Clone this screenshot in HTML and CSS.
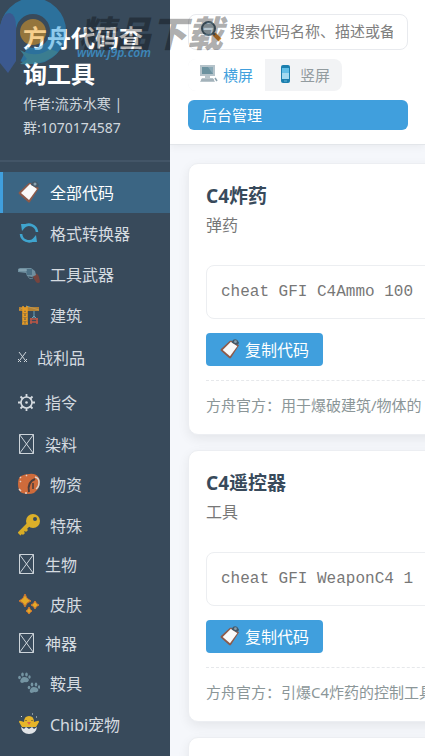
FILE: index.html
```html
<!DOCTYPE html>
<html lang="zh-CN">
<head>
    <meta charset="UTF-8">
    <meta name="viewport" content="width=device-width, initial-scale=1.0">
    <title>方舟代码查询工具</title>
    <link rel="stylesheet" href="styles.css">
</head>
<body>
    <!-- 图标定义 -->
    <svg class="icon-defs" aria-hidden="true">
        <symbol id="i-clipboard" viewBox="0 0 22 22">
            <path d="M13 2 21 7 12 21 Q11 22 10 21L1 13Q0 12 1 11L11 2Z" fill="#8d5a4a"/>
            <path d="M12 3 19 8 11 19 3 12Z" fill="#fafafa"/>
            <path d="M13 3Q15-1 19 1L21 4Q20 7 17 6L13 4Z" fill="#43596a"/>
            <circle cx="17" cy="3" r="1.5" fill="#8ba1ae"/>
        </symbol>
        <symbol id="i-refresh" viewBox="0 0 22 22">
            <path d="M19 10A8 8 0 0 0 6 4.500M3 12A8 8 0 0 0 16 17.500" fill="none" stroke="#3fa5cf" stroke-width="2.600"/>
            <path d="M3 2 10 2 4 9ZM19 20 12 20 18 13Z" fill="#3fa5cf"/>
        </symbol>
        <symbol id="i-gun" viewBox="0 0 22 22">
            <path d="M15 10Q20 10 21 14L22 19Q20 21 18 19L15 14Z" fill="#76443e"/>
            <path d="M0 6 2 5H13L17 8 18 12 14 14 9 13 8 10 0 9Z" fill="#6f8f9f"/>
            <path d="M8 6H14V12H9Z" fill="#4d7186"/>
            <path d="M1 7H9" stroke="#9ab5c2"/>
            <path d="M10 13Q11 17 15 15" fill="none" stroke="#668391"/>
        </symbol>
        <symbol id="i-crane" viewBox="0 0 22 22">
            <path d="M6 3 1 6M8 2 21 6M16 7V14M13 15 16 12 19 15" fill="none" stroke="#6aa0b8"/>
            <path d="M1 6H21M1 4H21" stroke="#dc9428" stroke-width="1.500"/>
            <path d="M5 2V20M9 2V20M5 3 9 7 5 11 9 15 5 19M9 3 5 7 9 11 5 15 9 19M4 20H10" fill="none" stroke="#e59b25" stroke-width="1.500"/>
            <path d="M12 15H20M12 18H20M13 14V20M19 14V20" stroke="#bd5746" stroke-width="1.500"/>
        </symbol>
        <symbol id="i-swords" viewBox="0 0 9 12">
            <path d="M1 1 7 9M8 1 2 9M0 8 3 11M9 8 6 11M0 11 2 9M9 11 7 9" fill="none" stroke="#cfd6db"/>
        </symbol>
        <symbol id="i-gear" viewBox="0 0 17 17">
            <circle cx="8.500" cy="8.500" r="5.500" fill="none" stroke="#d5dbe0" stroke-width="1.600"/>
            <circle cx="8.500" cy="8.500" r="1.300" fill="#d5dbe0"/>
            <path d="M8.500 0V3M8.500 14V17M0 8.500H3M14 8.500H17M2.500 2.500 4.500 4.500M12.500 12.500 14.500 14.500M14.500 2.500 12.500 4.500M4.500 12.500 2.500 14.500" stroke="#d5dbe0" stroke-width="1.800"/>
        </symbol>
        <symbol id="i-box" viewBox="0 0 17 20">
            <path d="M1.500.500H15.500V19.500H1.500ZM1.500.500 15.500 19.500M15.500.500 1.500 19.500" fill="none" stroke="#cdd4da"/>
        </symbol>
        <symbol id="i-bag" viewBox="0 0 22 22">
            <path d="M3 3Q7 1 11 1 18 0 21 5 23 10 20 16L16 20Q11 22 4 20 0 18 0 11 0 5 3 3Z" fill="#ce6b3b"/>
            <path d="M17 4Q21 5 21 9 21 14 18 16" fill="none" stroke="#dcd5cf" stroke-width="1.500"/>
            <path d="M11 19Q9 9 17 6" fill="none" stroke="#4a3d3c" stroke-width="2"/>
            <path d="M15 10V16" stroke="#4a3d3c" stroke-width="1.500"/>
            <path d="M2 5 3 4M8 3 9 2M1 16 3 18M7 20H9M2 9 3 8" stroke="#e6cfc4" stroke-width="1.500"/>
        </symbol>
        <symbol id="i-key" viewBox="0 0 22 22">
            <path d="M10 11 1 20" stroke="#d8ac26" stroke-width="4"/>
            <path d="M4 18 6 20M7 15 9 17" stroke="#d8ac26" stroke-width="3"/>
            <circle cx="15" cy="7" r="7" fill="#dbaf29"/>
            <circle cx="17" cy="5" r="2" fill="#384a5b"/>
        </symbol>
        <symbol id="i-sparkle" viewBox="0 0 22 22">
            <path d="M7 1Q8 6 13 8Q8 9 7 14Q6 9 1 8Q6 6 7 1ZM17 8Q18 11 21 12Q18 13 17 16Q16 13 13 12Q16 11 17 8ZM11 14Q12 17 14 18Q12 19 11 21Q10 19 8 18Q10 17 11 14Z" fill="#e4a927" stroke="#d4762f"/>
        </symbol>
        <symbol id="i-paws" viewBox="0 0 22 22">
            <g id="paw" fill="#7595a3">
                <path d="M6 5Q10 5 11 8Q10 11 7 10L4 11Q1 10 3 7Q4 5 6 5Z"/>
                <ellipse cx="1.500" cy="5.500" rx="1.300" ry="1.800"/>
                <ellipse cx="4.500" cy="2.500" rx="1.300" ry="2"/>
                <ellipse cx="8.500" cy="2.500" rx="1.300" ry="2"/>
                <ellipse cx="11.500" cy="5" rx="1.200" ry="1.800"/>
            </g>
            <use href="#paw" x="9.500" y="10"/>
        </symbol>
        <symbol id="i-chick" viewBox="0 0 22 22">
            <path d="M4 14 1 9Q1 7 3 8L6 9Q6 3 11 3T16 9L19 8Q21 7 21 9L18 14Z" fill="#e5b529"/>
            <path d="M3 14 6 16 8 14 11 16 14 14 16 16 19 14Q18 21 11 21T3 14Z" fill="#e1e4e7"/>
            <path d="M9 9 11 12 13 9Z" fill="#d9664e"/>
            <path d="M8 7V8M14 7V8" stroke="#4b4539"/>
            <path d="M3 3 4 4M14 1H15M18 4H19" stroke="#d7dce0"/>
        </symbol>
        <symbol id="i-search" viewBox="0 0 22 22">
            <path d="M14 14 20 20" stroke="#e08b2f" stroke-width="4"/>
            <path d="M12 12 15 15" stroke="#55616b" stroke-width="2"/>
            <circle cx="8.500" cy="8.500" r="6.500" fill="#b6c6cf" stroke="#4e6675" stroke-width="2"/>
        </symbol>
        <symbol id="i-desktop" viewBox="0 0 18 18">
            <path d="M0 0H15V11H0Z" fill="#b5c3ca"/>
            <path d="M2 2H13V9H2Z" fill="#6c929f"/>
            <path d="M8 2H13V9Z" fill="#8aa9b6"/>
            <path d="M5 11H10V13H5ZM2 13H13L15 17H0Z" fill="#b9c5cb"/>
            <path d="M1 15H14" stroke="#8ea0aa"/>
            <path d="M15 13 17 16" stroke="#8ba1ad" stroke-width="1.500"/>
        </symbol>
        <symbol id="i-phone" viewBox="0 0 10 18">
            <rect width="9" height="18" rx="2" fill="#1c7fae"/>
            <path d="M1 3H8V14H1Z" fill="#62bfe7"/>
            <path d="M1 8H8V14H1Z" fill="#a3daf0"/>
            <path d="M3 16H6" stroke="#67b6d7"/>
        </symbol>
    </svg>

    <div class="app">
        <aside class="sidebar">
            <div class="sidebar-header">
                <h1>方舟代码查询工具</h1>
                <p>作者:流苏水寒 | 群:1070174587</p>
            </div>
            <nav class="category-list">
                <a href="#" class="category active"><svg class="icon"><use href="#i-clipboard"/></svg>全部代码</a>
                <a href="#" class="category"><svg class="icon"><use href="#i-refresh"/></svg>格式转换器</a>
                <a href="#" class="category"><svg class="icon"><use href="#i-gun"/></svg>工具武器</a>
                <a href="#" class="category"><svg class="icon"><use href="#i-crane"/></svg>建筑</a>
                <a href="#" class="category symbol-sword"><svg class="icon"><use href="#i-swords"/></svg>战利品</a>
                <a href="#" class="category symbol-gear"><svg class="icon"><use href="#i-gear"/></svg>指令</a>
                <a href="#" class="category symbol-box"><svg class="icon"><use href="#i-box"/></svg>染料</a>
                <a href="#" class="category"><svg class="icon"><use href="#i-bag"/></svg>物资</a>
                <a href="#" class="category"><svg class="icon"><use href="#i-key"/></svg>特殊</a>
                <a href="#" class="category symbol-box"><svg class="icon"><use href="#i-box"/></svg>生物</a>
                <a href="#" class="category"><svg class="icon"><use href="#i-sparkle"/></svg>皮肤</a>
                <a href="#" class="category symbol-box"><svg class="icon"><use href="#i-box"/></svg>神器</a>
                <a href="#" class="category"><svg class="icon"><use href="#i-paws"/></svg>鞍具</a>
                <a href="#" class="category"><svg class="icon"><use href="#i-chick"/></svg>Chibi宠物</a>
            </nav>
        </aside>

        <main class="content">
            <header class="toolbar">
                <label class="search-box">
                    <svg class="icon"><use href="#i-search"/></svg>
                    <input type="text" aria-label="搜索代码" placeholder="搜索代码名称、描述或备注...">
                </label>
                <div class="view-toggle">
                    <button type="button" class="view-btn active"><svg class="desktop"><use href="#i-desktop"/></svg>横屏</button>
                    <button type="button" class="view-btn"><svg class="phone"><use href="#i-phone"/></svg>竖屏</button>
                </div>
                <a href="#" class="admin-btn">后台管理</a>
            </header>

            <div class="code-grid">
                <article class="code-card">
                    <h2>C4炸药</h2>
                    <p class="code-type">弹药</p>
                    <code class="code-text">cheat GFI C4Ammo 100</code>
                    <button type="button" class="copy-btn"><svg class="icon"><use href="#i-clipboard"/></svg>复制代码</button>
                    <p class="code-note">方舟官方：用于爆破建筑/物体的</p>
                </article>
                <article class="code-card">
                    <h2>C4遥控器</h2>
                    <p class="code-type">工具</p>
                    <code class="code-text">cheat GFI WeaponC4 1</code>
                    <button type="button" class="copy-btn"><svg class="icon"><use href="#i-clipboard"/></svg>复制代码</button>
                    <p class="code-note">方舟官方：引爆C4炸药的控制工具</p>
                </article>
                <article class="code-card"></article>
            </div>
        </main>
    </div>

    <!-- 站点水印 -->
    <div class="watermark" aria-hidden="true">
        <svg class="watermark-logo" viewBox="0 0 66 74">
            <path d="M8 31A25 25 0 1 1 33 56Q28 56 24 54" fill="none" stroke="#2298dc" stroke-width="16"/>
            <path d="M0 26Q3 12 10 13Q16 15 16 26V61L8 73 0 63Z" fill="#3f68c4"/>
            <path d="M20 50Q36 59 50 49L58 52Q45 66 20 64L27 59Z" fill="#3fb0c6"/>
            <circle cx="33" cy="32" r="13" fill="#efa01e"/>
        </svg>
        <span class="watermark-name">精品下载</span>
        <span class="watermark-url">www.j9p.com</span>
    </div>
</body>
</html>
```

FILE: styles.css
```css
* {
    margin: 0;
    padding: 0;
    box-sizing: border-box;
}

body {
    font-family: "Noto Sans", "Noto Sans CJK SC", sans-serif;
    font-size: 16px;
    background: #f5f7fb;
    color: #384a5b;
    overflow: hidden;
}

a {
    text-decoration: none;
}

button,
input {
    font-family: inherit;
    border: none;
}

svg {
    flex-shrink: 0;
}

.icon-defs {
    display: none;
}

.icon {
    width: 22px;
    height: 22px;
}

.app {
    display: flex;
    height: 100vh;
}

/* 侧边栏 */
.sidebar {
    width: 40%;
    max-width: 260px;
    flex-shrink: 0;
    background: #384a5b;
    color: white;
    overflow: hidden;
}

.sidebar-header {
    padding: 20px 23px;
    border-bottom: 2px solid #435567;
}

.sidebar-header h1 {
    font-size: 24px;
    line-height: 36px;
}

.sidebar-header p {
    font-size: 14px;
    line-height: 24px;
    color: #d0d7dd;
}

.category-list {
    padding-top: 10px;
}

.category {
    display: flex;
    align-items: center;
    gap: 10px;
    height: 41px;
    padding-bottom: 2px;
    padding-left: 15px;
    border-left: 3px solid transparent;
    color: #d5dbe0;
    white-space: nowrap;
}

.category.active {
    background: #3b6583;
    border-left-color: #409fdd;
    color: white;
}

.symbol-sword {
    height: 44px;
}

.symbol-sword .icon {
    width: 9px;
    height: 12px;
}

.symbol-gear {
    height: 46px;
}

.symbol-gear .icon {
    width: 17px;
    height: 17px;
}

.symbol-box {
    height: 38px;
}

.symbol-box .icon {
    width: 17px;
    height: 20px;
}

/* 主内容 */
.content {
    flex: 1;
    min-width: 0;
    overflow: hidden;
}

.toolbar {
    display: flex;
    flex-direction: column;
    gap: 9px;
    padding: 14px 17px 14px 18px;
    background: white;
    border-bottom: 1px solid #e3e6ea;
    box-shadow: 0 2px 8px rgba(0, 0, 0, 0.05);
}

.search-box {
    display: flex;
    align-items: center;
    gap: 8px;
    height: 36px;
    padding: 0 14px 2px 11px;
    border: 1px solid #e8eaee;
    border-radius: 8px;
}

.search-box input {
    flex: 1;
    min-width: 0;
    background: transparent;
    font-size: 15px;
    outline: none;
}

.search-box input::placeholder {
    color: #808080;
}

.view-toggle {
    display: flex;
    align-self: flex-start;
    background: #f2f3f5;
    border-radius: 8px;
    overflow: hidden;
}

.view-btn {
    display: flex;
    align-items: center;
    gap: 5px;
    height: 32px;
    padding: 0 12px 2px;
    background: transparent;
    color: #929b9f;
    font-size: 15px;
}

.view-btn.active {
    background: white;
    color: #409fdd;
}

.desktop,
.phone {
    width: 18px;
    height: 18px;
}

.admin-btn {
    padding: 0 14px;
    background: #409fdd;
    color: white;
    border-radius: 6px;
    font-size: 15px;
    line-height: 30px;
}

.code-grid {
    display: grid;
    grid-template-columns: repeat(auto-fill, minmax(300px, 1fr));
    gap: 15px;
    padding: 18px;
}

.code-card {
    min-height: 272px;
    padding: 17px;
    background: white;
    border: 1px solid #eceef2;
    border-radius: 10px;
    box-shadow: 0 4px 12px rgba(0, 0, 0, 0.07);
}

.code-card h2 {
    font-size: 19px;
    line-height: 30px;
}

.code-type {
    color: #777;
    line-height: 28px;
}

.code-text {
    display: block;
    margin: 26px 0 14px;
    padding: 14px;
    border: 1px solid #eceef1;
    border-radius: 8px;
    color: #777;
    font-family: "Courier New", "Liberation Mono", monospace;
    font-size: 16px;
    line-height: 24px;
    white-space: nowrap;
    overflow: hidden;
}

.copy-btn {
    display: flex;
    align-items: center;
    gap: 5px;
    height: 33px;
    padding: 0 14px 2px;
    background: #409fdd;
    color: white;
    border-radius: 4px;
    font-size: 16px;
}

.copy-btn .icon {
    width: 20px;
    height: 20px;
}

.code-note {
    margin-top: 14px;
    padding-top: 12px;
    border-top: 1px dashed #e6e8eb;
    color: #8b9698;
    font-size: 15px;
    line-height: 24px;
    white-space: nowrap;
}

/* 水印 */
.watermark {
    position: absolute;
    top: 0;
    left: 0;
    width: 230px;
    height: 74px;
    pointer-events: none;
}

.watermark-logo {
    position: absolute;
    top: 0;
    left: 0;
    width: 66px;
    height: 74px;
    opacity: 0.5;
}

.watermark-name {
    position: absolute;
    top: 10px;
    left: 79px;
    color: rgba(0, 0, 0, 0.33);
    font-family: "Noto Sans CJK SC", sans-serif;
    font-size: 36px;
    font-style: italic;
    font-weight: 900;
    line-height: 42px;
    white-space: nowrap;
}

.watermark-url {
    position: absolute;
    top: 44px;
    left: 77px;
    color: #3d86b8;
    font-size: 12px;
    font-style: italic;
    font-weight: 600;
    line-height: 18px;
}
```
